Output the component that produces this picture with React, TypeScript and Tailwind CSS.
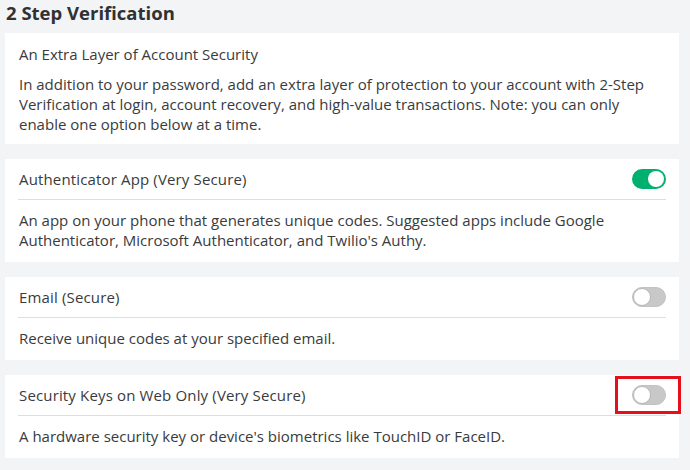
import React from "react";

type Option = {
	title: string;
	description: string;
	enabled: boolean;
	highlighted?: boolean;
};

const options: Option[] = [
	{
		title: "Authenticator App (Very Secure)",
		description:
			"An app on your phone that generates unique codes. Suggested apps include Google Authenticator, Microsoft Authenticator, and Twilio's Authy.",
		enabled: true,
	},
	{
		title: "Email (Secure)",
		description: "Receive unique codes at your specified email.",
		enabled: false,
	},
	{
		title: "Security Keys on Web Only (Very Secure)",
		description: "A hardware security key or device's biometrics like TouchID or FaceID.",
		enabled: false,
		highlighted: true,
	},
];

const Toggle = ({ on }: { on: boolean }) => (
	<div
		className={
			on
				? "flex h-[20px] w-[34px] shrink-0 items-center justify-end rounded-full bg-[#00b06f] p-[2px]"
				: "flex h-[20px] w-[34px] shrink-0 items-center justify-start rounded-full border border-[#c2c2c2] bg-[#c8c8c8]"
		}
	>
		<div
			className={
				on
					? "h-[16px] w-[16px] rounded-full bg-white"
					: "h-[18px] w-[18px] rounded-full border border-[#b8b8b8] bg-white"
			}
		/>
	</div>
);

const OptionCard = ({ option }: { option: Option }) => (
	<div className="bg-white px-[13px]">
		<div className="relative flex h-[41px] items-center justify-between border-b border-[#dcdedf] pl-px">
			<span className="tracking-[0.15px]">{option.title}</span>
			<Toggle on={option.enabled} />
			{option.highlighted && (
				<div className="absolute right-[-15px] top-[1px] h-[38px] w-[66px] border-[3px] border-[#e4111b]" />
			)}
		</div>
		<p className="pb-[12px] pl-px pt-[10px]">{option.description}</p>
	</div>
);

export default function App() {
	return (
		<div
			className="h-[470px] w-[690px] overflow-hidden bg-[#f2f4f5] pl-[5px] pr-[11px] text-[15px] leading-[20px] text-[#393b3d]"
			style={{ fontFamily: '"Open Sans", "Liberation Sans", sans-serif' }}
		>
			<h2 className="h-[33px] pl-px pt-[1px] text-[18.5px] font-bold leading-[24px] text-[#2f3133]">2 Step Verification</h2>
			<div className="flex flex-col gap-[15px]">
				<div className="bg-white px-[13px] pb-[10px] pt-[11px] pl-[14px]">
					<div>An Extra Layer of Account Security</div>
					<p className="mt-[10px]">
						In addition to your password, add an extra layer of protection to your account with 2-Step Verification
						at login, account recovery, and high-value transactions. Note: you can only enable one option below at a
						time.
					</p>
				</div>
				{options.map((option) => (
					<OptionCard key={option.title} option={option} />
				))}
			</div>
		</div>
	);
}
